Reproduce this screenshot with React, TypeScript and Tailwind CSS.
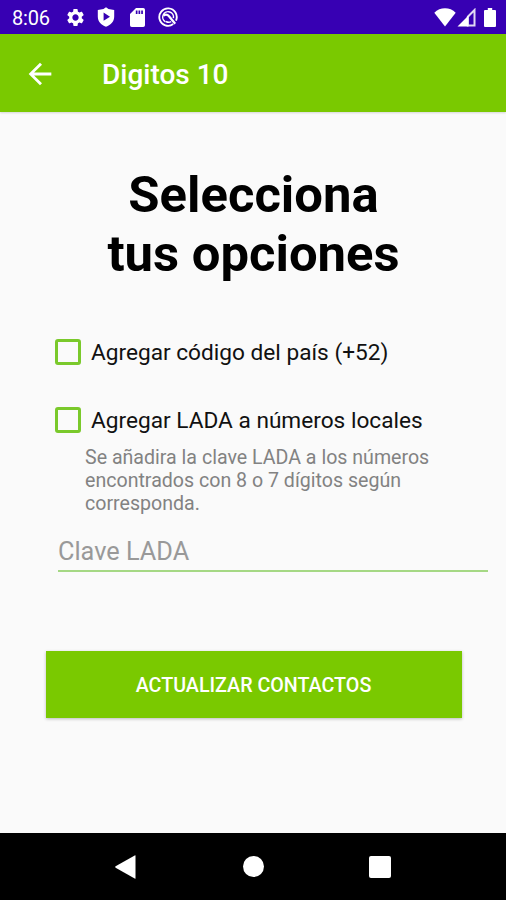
import { useState } from "react";

import clsx from "clsx";
import { MdArrowBack, MdSettings } from "react-icons/md";

const StatusBar = () => (
  <div className="flex h-[34px] shrink-0 items-center bg-[#3700b3] pl-3 pr-[10px] text-white">
    <span className="w-[53px] pt-[2px] text-[20px] leading-none tracking-[-0.2px]">
      8:06
    </span>
    <MdSettings className="size-[21px] shrink-0" />
    <svg viewBox="0 0 18 20" className="ml-[11px] h-[20px] w-[18px]">
      <path
        fill="currentColor"
        fillRule="evenodd"
        d="M9 .3 11.500 2l5.700 1v6.500c0 5-3.200 8.400-8.200 10.200C4 17.900.8 14.500.8 9.500V3l5.700-1zM6.600 5.600v8.200L13 9.700z"
      />
    </svg>
    <svg viewBox="0 0 15 19" className="ml-[15px] h-[19px] w-[15px]">
      <path
        fill="currentColor"
        fillRule="evenodd"
        d="M6 0h7.200Q15 0 15 1.800v15.400q0 1.800-1.800 1.800H1.800Q0 19 0 17.200V6zM5.800 2.500V6h1.700V2.500zm2.700 0V6h1.700V2.500zm2.700 0V6h1.700V2.500z"
      />
    </svg>
    <svg
      viewBox="0 0 20 20"
      className="ml-[13px] size-[20px]"
      fill="none"
      stroke="currentColor"
    >
      <path d="M15.200 17.100A8.700 8.700 0 1 1 18 13.600" strokeWidth="1.900" />
      <path d="M7.500 14.800a5.400 5.400 0 1 1 7.900-3.600" strokeWidth="1.500" />
      <path
        d="M5.500 8.500c2.200-1.400 4.200-.8 5.500.8l6.200 7.500"
        strokeWidth="2.200"
      />
      <path d="M8 14.500c1.600.9 3.600 1 5.200.2" strokeWidth="1.500" />
    </svg>
    <svg viewBox="0 0 22 19" className="ml-auto h-[19px] w-[22px]">
      <path fill="currentColor" d="M11 18.600.3 4.700C6-1.200 16-1.200 21.700 4.700z" />
    </svg>
    <svg viewBox="0 0 19 19" className="ml-[1px] h-[19px] w-[19px]">
      <path fill="currentColor" d="M11.500 7.500v11H.5z" />
      <path
        d="M10.800 8.800 17.500 2v15.500h-6.700z"
        fill="none"
        stroke="currentColor"
        strokeWidth="2"
        opacity=".85"
      />
    </svg>
    <svg viewBox="0 0 12 19" className="ml-[8px] h-[19px] w-[12px]">
      <path
        fill="currentColor"
        d="M3.800 0h4.400v2H11q1 0 1 1v15q0 1-1 1H1q-1 0-1-1V3q0-1 1-1h2.800z"
      />
    </svg>
  </div>
);

const AppBar = () => (
  <header className="flex h-[78px] shrink-0 items-center bg-[#7ac900] pl-[23px] pt-[2px] text-white shadow-[0_1px_2px_rgba(0,0,0,0.15)]">
    <button type="button" aria-label="Atrás">
      <MdArrowBack className="size-[34px]" />
    </button>
    <h1 className="ml-[45px] pt-[2px] text-[28px] font-medium leading-none">
      Digitos 10
    </h1>
  </header>
);

type OptionProps = {
  label: string;
  checked: boolean;
  onChange: () => void;
};

const Option = ({ label, checked, onChange }: OptionProps) => (
  <label className="flex h-[26px] items-center gap-[10px]">
    <input
      type="checkbox"
      className="sr-only"
      checked={checked}
      onChange={onChange}
    />
    <span
      className={clsx(
        "size-[26px] shrink-0 rounded-[3px] border-[3px] border-[#7ac92b]",
        checked && "bg-[#7ac92b]"
      )}
    />
    <span className="whitespace-nowrap pt-[2px] text-[22.650px] leading-[26px] text-[#111]">
      {label}
    </span>
  </label>
);

const NavigationBar = () => (
  <nav className="flex h-[67px] shrink-0 items-center bg-black pl-[115px] text-white">
    <svg viewBox="0 0 21 24" className="h-[24px] w-[21px]">
      <path
        fill="currentColor"
        d="M20.500.8v22.400q0 .8-.8.400L.6 12.700q-.8-.7 0-1.400L19.700.4q.8-.4.8.4z"
      />
    </svg>
    <span className="ml-[107px] size-[21px] rounded-full bg-white" />
    <span className="ml-[105px] size-[22px] rounded-[2px] bg-white" />
  </nav>
);

export default function App() {
  const [countryCode, setCountryCode] = useState(false);
  const [areaCode, setAreaCode] = useState(false);

  return (
    <div className="flex h-[900px] w-[506px] flex-col overflow-hidden bg-[#fafafa] font-['Roboto',sans-serif]">
      <StatusBar />
      <AppBar />

      <main className="flex-1">
        <h2 className="mt-[53px] pl-px text-center text-[50.800px] font-bold leading-[59px] text-black">
          Selecciona
          <br />
          tus opciones
        </h2>

        <div className="mt-[56px] pl-[55px] pr-[18px]">
          <Option
            label="Agregar código del país (+52)"
            checked={countryCode}
            onChange={() => setCountryCode((prev) => !prev)}
          />
          <div className="mt-[42px]">
            <Option
              label="Agregar LADA a números locales"
              checked={areaCode}
              onChange={() => setAreaCode((prev) => !prev)}
            />
          </div>

          <p className="mt-[13px] pl-[30px] text-[19.600px] leading-[23px] text-[#828282]">
            Se añadira la clave LADA a los números
            <br />
            encontrados con 8 o 7 dígitos según
            <br />
            corresponda.
          </p>

          <input
            type="text"
            placeholder="Clave LADA"
            className="ml-[3px] mt-[17px] block h-[40px] w-[430px] border-b-2 border-b-[#a5d884] bg-transparent text-[25.300px] outline-none placeholder:text-[#999]"
          />
        </div>

        <button
          type="button"
          className="ml-[45.500px] mt-[79px] h-[67px] w-[416px] bg-[#7ac900] pt-[3px] text-[19.700px] font-medium text-white shadow-[0_1px_3px_rgba(0,0,0,0.25)]"
        >
          ACTUALIZAR CONTACTOS
        </button>
      </main>

      <NavigationBar />
    </div>
  );
}
